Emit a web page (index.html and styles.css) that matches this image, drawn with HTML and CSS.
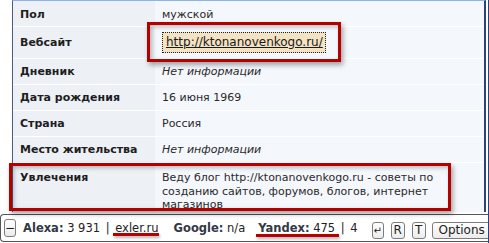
FILE: index.html
```html
<!DOCTYPE html>
<html lang="ru">
<head>
    <meta charset="UTF-8">
    <title>Профиль</title>
    <link rel="stylesheet" href="styles.css">
</head>
<body>
    <div class="page">
        <div class="profile">
            <div class="row">
                <div class="label">Пол</div>
                <div class="value">мужской</div>
            </div>
            <div class="row row-site">
                <div class="label">Вебсайт</div>
                <div class="value"><a class="site-link" href="#">http://ktonanovenkogo.ru/</a></div>
            </div>
            <div class="row">
                <div class="label">Дневник</div>
                <div class="value empty">Нет информации</div>
            </div>
            <div class="row">
                <div class="label">Дата рождения</div>
                <div class="value">16 июня 1969</div>
            </div>
            <div class="row">
                <div class="label">Страна</div>
                <div class="value">Россия</div>
            </div>
            <div class="row">
                <div class="label">Место жительства</div>
                <div class="value empty">Нет информации</div>
            </div>
            <div class="row row-hobby">
                <div class="label">Увлечения</div>
                <div class="value">Веду блог http://ktonanovenkogo.ru - советы по созданию сайтов, форумов, блогов, интернет магазинов</div>
            </div>
        </div>

        <!-- seo bar -->
        <div class="seobar">
            <span class="btn btn-min">&minus;</span>
            <span class="stat stat-alexa"><b>Alexa:</b> 3 931 <span class="sep">|</span> <span class="marked">exler.ru</span></span>
            <span class="stat stat-google"><b>Google:</b> n/a</span>
            <span class="stat"><span class="marked marked-ya"><b>Yandex:</b> 475 </span><span class="sep">|</span> 4</span>
            <span class="tools">
                <span class="btn btn-ret">&#8629;</span>
                <span class="btn btn-sm">R</span>
                <span class="btn btn-sm">T</span>
                <span class="btn btn-opt">Options</span>
            </span>
        </div>

        <div class="mark mark-site"></div>
        <div class="mark mark-hobby"></div>
    </div>
</body>
</html>
```

FILE: styles.css
```css
body {
    margin: 0;
    background: #fff;
    font-family: 'DejaVu Sans', Verdana, sans-serif;
    color: #222;
}
.page {
    position: relative;
    width: 488px;
    height: 243px;
    border-right: 1px solid #2c4578;
    overflow: hidden;
}
.profile {
    margin-left: 12px;
    width: 471px;
    border-left: 1px solid #4a5c86;
    border-right: 2px solid #2c4578;
    border-top: 1px solid #8cb4ec;
    font-size: 11px;
}
.row {
    display: grid;
    grid-template-columns: 142px 1fr;
    height: 25px;
    border-bottom: 1px solid #fff;
}
.row-site {
    height: 31px;
}
.row-hobby {
    height: 49px;
    border-bottom: none;
}
.label {
    display: flex;
    align-items: center;
    padding-left: 7px;
    background: #edf0f5;
    font-weight: bold;
    color: #1e1e1e;
}
.value {
    display: flex;
    align-items: center;
    padding-left: 7px;
    background: #f4f7fc;
    color: #2a2a2a;
}
.row:first-child .label,
.row:first-child .value {
    padding-top: 1px;
}
.row-hobby .label,
.row-hobby .value {
    align-items: flex-start;
    padding-top: 8px;
    line-height: 13.5px;
}
.row-hobby .value {
    padding-right: 20px;
}
.empty {
    font-style: italic;
}
.site-link {
    color: #1a1a1a;
    background: #f3e3c3;
    border: 1px dotted #222;
    padding: 2px 2px 3px 3px;
    font-size: 12px;
    text-decoration: underline;
}

.seobar {
    display: flex;
    align-items: center;
    margin-top: 2px;
    height: 26px;
    border: 1px solid #555;
    border-right: none;
    border-radius: 4px 0 0 4px;
    font-size: 11.5px;
    color: #222;
    white-space: nowrap;
}
.seobar b {
    color: #333846;
}
.stat-alexa {
    margin-right: 15px;
}
.stat-google {
    margin-right: 13px;
}
.sep {
    margin: 0 2px;
}
.marked {
    position: relative;
}
.marked::after {
    content: "";
    position: absolute;
    left: -2px;
    right: 0;
    bottom: -1px;
    height: 3px;
    background: #b80000;
    box-shadow: 1px 2px 3px rgba(0, 0, 0, 0.3);
}
.marked-ya::after {
    bottom: -2px;
}
.btn {
    box-sizing: border-box;
    display: inline-flex;
    align-items: center;
    justify-content: center;
    border: 1px solid #7c7c7c;
    border-radius: 3px;
    background: linear-gradient(#fff, #ececec);
    color: #222;
    height: 17px;
    font-size: 12px;
}
.btn-min {
    width: 16px;
    height: 18px;
    margin: 0 7px 0 3px;
}
.tools {
    display: flex;
    align-items: center;
    margin-left: 14px;
    padding-top: 4px;
}
.btn-ret {
    width: 12px;
    font-size: 10px;
    margin-right: 7px;
}
.btn-sm {
    width: 14px;
    margin-right: 7px;
}
.btn-opt {
    width: 60px;
    margin-left: -1px;
}

.mark {
    position: absolute;
    border: 3px solid #b50000;
    box-shadow: 2px 3px 5px rgba(0, 0, 0, 0.35), inset 2px 2px 4px rgba(0, 0, 0, 0.25);
}
.mark-site {
    left: 147px;
    top: 22px;
    width: 188px;
    height: 34px;
}
.mark-hobby {
    left: 9px;
    top: 163px;
    width: 436px;
    height: 42px;
}
```
